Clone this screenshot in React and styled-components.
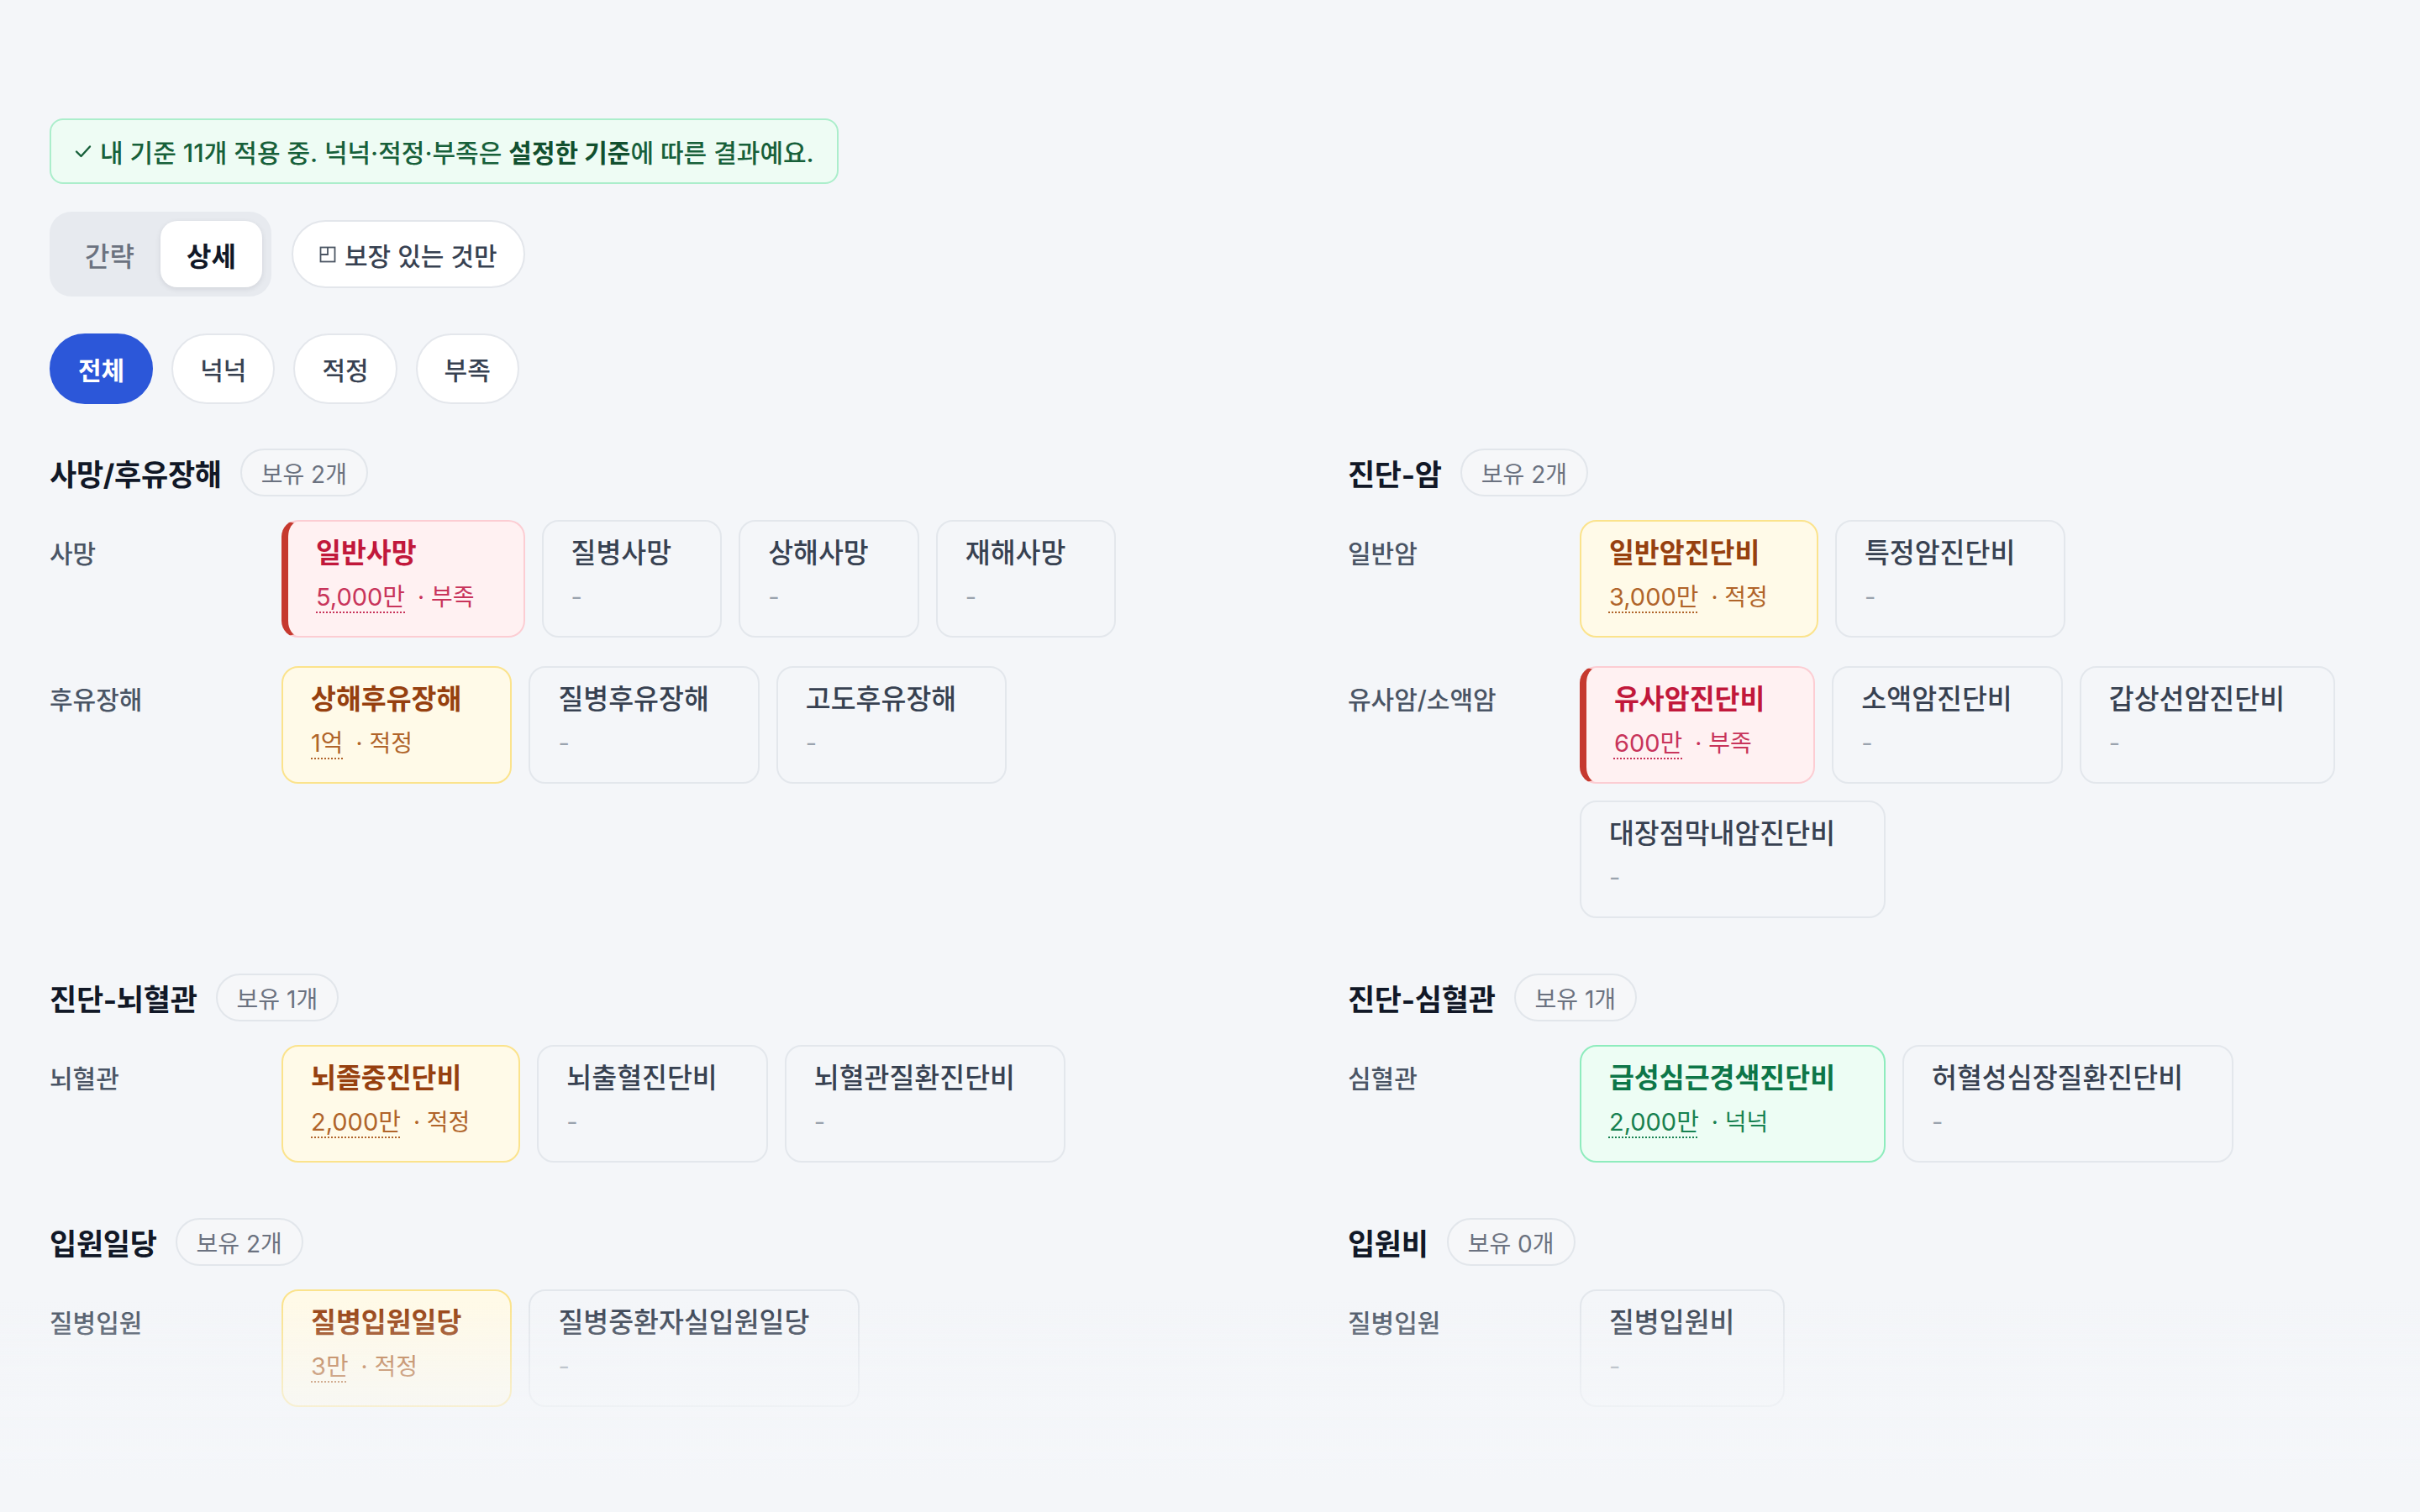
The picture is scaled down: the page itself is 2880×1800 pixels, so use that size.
import React from 'react';
import styled, { createGlobalStyle, css } from 'styled-components';

const Global = createGlobalStyle`
  html, body {
    margin: 0;
    background: #f4f6f9;
  }
  body {
    font-family: "Inter", "Noto Sans CJK KR", "Noto Sans", sans-serif;
    color: #111827;
    -webkit-font-smoothing: antialiased;
  }
  * { box-sizing: border-box; }
`;

const Page = styled.div`
  padding: 141px 59px 60px;
  display: flex;
  flex-direction: column;
  align-items: flex-start;
`;

const Banner = styled.div`
  display: inline-flex;
  align-items: center;
  gap: 8px;
  height: 78px;
  padding: 0 27px 0 26px;
  border: 2px solid #abeecb;
  border-radius: 16px;
  background: #eefcf4;
  color: #17603a;
  font-size: 30px;
  font-weight: 500;
  margin-bottom: 33px;
  b { font-weight: 700; color: #12502f; }
`;

const ControlRow = styled.div`
  display: flex;
  align-items: center;
  gap: 24px;
  margin-bottom: 44px;
`;

const Segmented = styled.div`
  display: flex;
  padding: 11px;
  background: #e7eaef;
  border-radius: 26px;
`;

const Segment = styled.div`
  width: 121px;
  height: 79px;
  display: flex;
  align-items: center;
  justify-content: center;
  border-radius: 20px;
  font-size: 32px;
  font-weight: 500;
  color: #6b7280;
  ${p => p.$active && css`
    background: #ffffff;
    color: #111827;
    font-weight: 700;
    box-shadow: 0 2px 6px rgba(15, 23, 42, 0.10);
  `}
`;

const FilterButton = styled.div`
  display: flex;
  align-items: center;
  gap: 10px;
  height: 81px;
  padding: 0 31px 0 31px;
  border: 2px solid #e3e6eb;
  border-radius: 41px;
  background: #ffffff;
  color: #374151;
  font-size: 30px;
  font-weight: 500;
`;

const ChipRow = styled.div`
  display: flex;
  gap: 22px;
  margin-bottom: 53px;
`;

const Chip = styled.div`
  height: 84px;
  min-width: 121px;
  padding: 0 32px;
  display: flex;
  align-items: center;
  justify-content: center;
  border-radius: 42px;
  font-size: 30px;
  font-weight: 500;
  background: #ffffff;
  border: 2px solid #e4e7ec;
  color: #374151;
  ${p => p.$active && css`
    background: #2c57d9;
    border-color: #2c57d9;
    color: #ffffff;
    font-weight: 700;
  `}
`;

const SectionGrid = styled.div`
  align-self: stretch;
  display: grid;
  grid-template-columns: minmax(0, 1.23fr) minmax(0, 1fr);
  column-gap: 48px;
  row-gap: 66px;
`;

const Section = styled.section`
  display: flex;
  flex-direction: column;
`;

const SectionHeader = styled.div`
  display: flex;
  align-items: center;
  gap: 22px;
  margin-bottom: 28px;
`;

const SectionTitle = styled.h2`
  margin: 0;
  font-size: 35px;
  font-weight: 700;
  color: #111827;
  letter-spacing: -0.3px;
`;

const CountBadge = styled.span`
  height: 57px;
  padding: 0 23px;
  display: inline-flex;
  align-items: center;
  border: 2px solid #e2e6eb;
  border-radius: 29px;
  background: #f6f7f9;
  color: #6b7280;
  font-size: 28px;
`;

const Rows = styled.div`
  display: flex;
  flex-direction: column;
  gap: 34px;
`;

const Row = styled.div`
  display: grid;
  grid-template-columns: 276px minmax(0, 1fr);
`;

const RowLabel = styled.div`
  padding-top: 20px;
  line-height: 40px;
  font-size: 30px;
  font-weight: 500;
  color: #4a5565;
`;

const Cards = styled.div`
  display: flex;
  flex-wrap: wrap;
  gap: 20px;
`;

const tones = {
  short: { bg: '#fff1f2', border: '#fccdd3', title: '#c1183b', sub: '#c8345b' },
  ok: { bg: '#fffae8', border: '#fbe38c', title: '#96400f', sub: '#b0642a' },
  plenty: { bg: '#edfdf4', border: '#8eecbd', title: '#0d7648', sub: '#178150' },
  none: { bg: 'transparent', border: '#e3e7ec', title: '#374151', sub: '#9aa3ae' },
};

const Card = styled.div`
  height: 140px;
  padding: 18px 58px 0 33px;
  border-radius: 20px;
  border: 2px solid ${p => tones[p.$tone].border};
  ${p => p.$tone === 'short' && css`border-left: 8px solid #c6392f;`}
  background: ${p => tones[p.$tone].bg};
  display: flex;
  flex-direction: column;
  gap: 14px;
`;

const CardTitle = styled.div`
  font-size: 32.5px;
  line-height: 40px;
  white-space: nowrap;
  font-weight: ${p => (p.$tone === 'none' ? 500 : 700)};
  color: ${p => tones[p.$tone].title};
`;

const CardSub = styled.div`
  font-size: 29px;
  line-height: 36px;
  white-space: nowrap;
  color: ${p => tones[p.$tone].sub};
`;

const Amount = styled.span`
  text-decoration: underline dotted;
  text-decoration-thickness: 2px;
  text-underline-offset: 7px;
`;

const Status = styled.span`
  margin-left: 15px;
  font-size: 28px;
`;

const BottomFade = styled.div`
  position: fixed;
  left: 0;
  right: 0;
  bottom: 0;
  height: 250px;
  pointer-events: none;
  background: linear-gradient(to bottom, rgba(244, 246, 249, 0) 0%, rgba(244, 246, 249, 0.6) 45%, #f4f6f9 85%);
`;

const CheckIcon = () => (
  <svg width="24" height="24" viewBox="0 0 24 24" fill="none" stroke="#17603a" strokeWidth="2.4" strokeLinecap="round" strokeLinejoin="round">
    <polyline points="4 12.5 9.5 18 20 6.5" />
  </svg>
);

const QuadIcon = () => (
  <svg width="20" height="20" viewBox="0 0 20 20" fill="none" stroke="#4b5563" strokeWidth="1.8">
    <rect x="1.5" y="1.5" width="17" height="17" />
    <path d="M1.5 10 H10 V1.5" />
  </svg>
);

const statusLabel = { short: '부족', ok: '적정', plenty: '넉넉' };

const sections = [
  {
    title: '사망/후유장해', count: 2, rows: [
      { label: '사망', items: [
        { name: '일반사망', amount: '5,000만', status: 'short' },
        { name: '질병사망' }, { name: '상해사망' }, { name: '재해사망' },
      ] },
      { label: '후유장해', items: [
        { name: '상해후유장해', amount: '1억', status: 'ok' },
        { name: '질병후유장해' }, { name: '고도후유장해' },
      ] },
    ],
  },
  {
    title: '진단-암', count: 2, rows: [
      { label: '일반암', items: [
        { name: '일반암진단비', amount: '3,000만', status: 'ok' },
        { name: '특정암진단비' },
      ] },
      { label: '유사암/소액암', items: [
        { name: '유사암진단비', amount: '600만', status: 'short' },
        { name: '소액암진단비' }, { name: '갑상선암진단비' }, { name: '대장점막내암진단비' },
      ] },
    ],
  },
  {
    title: '진단-뇌혈관', count: 1, rows: [
      { label: '뇌혈관', items: [
        { name: '뇌졸중진단비', amount: '2,000만', status: 'ok' },
        { name: '뇌출혈진단비' }, { name: '뇌혈관질환진단비' },
      ] },
    ],
  },
  {
    title: '진단-심혈관', count: 1, rows: [
      { label: '심혈관', items: [
        { name: '급성심근경색진단비', amount: '2,000만', status: 'plenty' },
        { name: '허혈성심장질환진단비' },
      ] },
    ],
  },
  {
    title: '입원일당', count: 2, rows: [
      { label: '질병입원', items: [
        { name: '질병입원일당', amount: '3만', status: 'ok' },
        { name: '질병중환자실입원일당' },
      ] },
    ],
  },
  {
    title: '입원비', count: 0, rows: [
      { label: '질병입원', items: [{ name: '질병입원비' }] },
    ],
  },
];

const CoverageCard = ({ item }) => {
  const tone = item.status || 'none';
  return (
    <Card $tone={tone}>
      <CardTitle $tone={tone}>{item.name}</CardTitle>
      <CardSub $tone={tone}>
        {item.status ? (
          <>
            <Amount>{item.amount}</Amount>
            <Status>· {statusLabel[item.status]}</Status>
          </>
        ) : '-'}
      </CardSub>
    </Card>
  );
};

export default function App() {
  return (
    <>
      <Global />
      <Page>
        <Banner>
          <CheckIcon />
          <span>내 기준 11개 적용 중. 넉넉·적정·부족은 <b>설정한 기준</b>에 따른 결과예요.</span>
        </Banner>
        <ControlRow>
          <Segmented>
            <Segment>간략</Segment>
            <Segment $active>상세</Segment>
          </Segmented>
          <FilterButton>
            <QuadIcon />
            <span>보장 있는 것만</span>
          </FilterButton>
        </ControlRow>
        <ChipRow>
          <Chip $active>전체</Chip>
          <Chip>넉넉</Chip>
          <Chip>적정</Chip>
          <Chip>부족</Chip>
        </ChipRow>
        <SectionGrid>
          {sections.map(sec => (
            <Section key={sec.title}>
              <SectionHeader>
                <SectionTitle>{sec.title}</SectionTitle>
                <CountBadge>보유 {sec.count}개</CountBadge>
              </SectionHeader>
              <Rows>
                {sec.rows.map(row => (
                  <Row key={row.label}>
                    <RowLabel>{row.label}</RowLabel>
                    <Cards>
                      {row.items.map(item => <CoverageCard key={item.name} item={item} />)}
                    </Cards>
                  </Row>
                ))}
              </Rows>
            </Section>
          ))}
        </SectionGrid>
      </Page>
      <BottomFade />
    </>
  );
}
